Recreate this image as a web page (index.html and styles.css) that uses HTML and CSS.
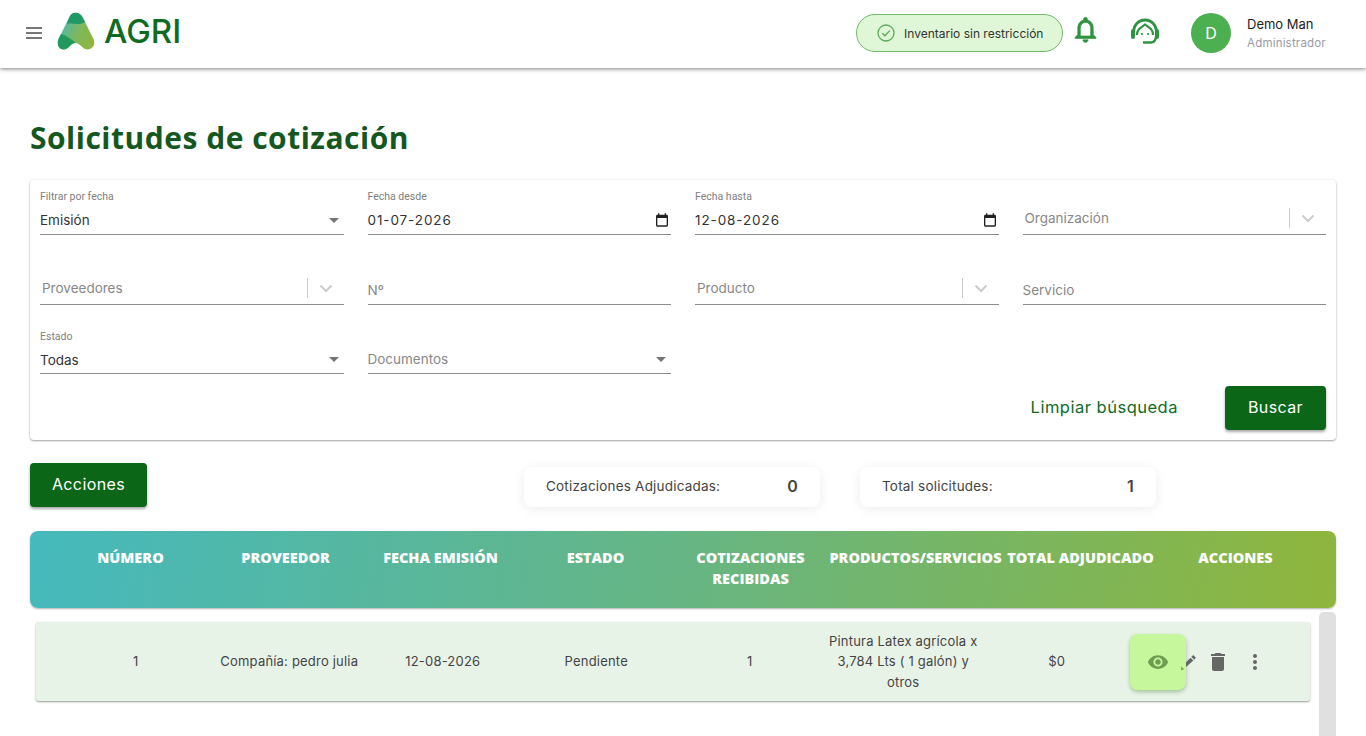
FILE: index.html
```html
<!DOCTYPE html>
<html lang="es">

<head>
    <meta charset="UTF-8">
    <meta name="viewport" content="width=device-width, initial-scale=1.0">
    <title>Solicitudes de cotización</title>
    <link rel="stylesheet" href="styles.css">
</head>

<body>
    <header class="topbar">
        <svg class="menu-icon" width="24" height="24" viewBox="0 0 24 24"><path d="M4 18h16v-2H4v2zm0-5h16v-2H4v2zm0-7v2h16V6H4z" /></svg>
        <div class="logo">
            <svg width="38" height="38" viewBox="0 0 38 38">
                <defs>
                    <linearGradient id="logoMain" x1="0" y1="0.3" x2="1" y2="0.8">
                        <stop offset="0" stop-color="#45b9bd" />
                        <stop offset="0.55" stop-color="#7fb75c" />
                        <stop offset="1" stop-color="#8fb63c" />
                    </linearGradient>
                </defs>
                <path d="M12 6C14-1 23-1 26 6L36.500 27C39 33 35 37.500 30.500 37.500C26 37.500 24 32 19 31C14 30 12 37.500 6.500 37.500C2 37.500-.5 32.500 1.500 27Z" fill="url(#logoMain)" />
                <path d="M12 6C14-1 23-1 26 6L28 10C23 14 15 10.500 9.500 12Z" fill="#1f9a66" />
                <path d="M4 22C9 23 14 27 19 31C14 30 12 37.500 6.500 37.500C2 37.500-.5 32.500 1.500 27Z" fill="#1f9a5a" />
            </svg>
            <span class="logo-text">AGRI</span>
        </div>
        <div class="topbar-right">
            <div class="chip">
                <svg width="20" height="20" viewBox="0 0 20 20" fill="none" stroke="#5aa95a" stroke-width="1.300"><circle cx="10" cy="10" r="8" /><path d="M6.300 10.200l2.600 2.600 4.900-5.200" /></svg>
                <span>Inventario sin restricción</span>
            </div>
            <svg class="bell" width="31" height="31" viewBox="0 0 24 24"><path d="M12 22c1.100 0 2-.9 2-2h-4c0 1.100.9 2 2 2zm6-6v-5c0-3.070-1.640-5.640-4.500-6.320V4c0-.83-.67-1.500-1.500-1.500s-1.500.67-1.500 1.500v.68C7.630 5.360 6 7.920 6 11v5l-2 2v1h16v-1l-2-2zm-2 1H8v-6c0-2.480 1.510-4.500 4-4.500s4 2.020 4 4.500v6z" /></svg>
            <svg class="headset" width="30" height="28" viewBox="0 0 30 28" fill="none" stroke="#2e9440" stroke-width="2.800">
                <path d="M3.500 15C3.500 7 8.500 2 15 2s11.500 5 11.500 13" />
                <path d="M7 17C7 11 10.500 10 15 6.500C19.500 10 23 11 23 17" stroke-width="2.200" />
                <path d="M3 13v6M27 13v6" stroke-width="4" stroke-linecap="round" />
                <path d="M26 19c-.5 3.500-2 5.500-5 5.500H13" stroke-width="2.400" />
                <circle cx="12" cy="16" r="1.100" fill="#2e9440" stroke="none" />
                <circle cx="18" cy="16" r="1.100" fill="#2e9440" stroke="none" />
            </svg>
            <div class="avatar">D</div>
            <div class="user">
                <div class="user-name">Demo Man</div>
                <div class="user-role">Administrador</div>
            </div>
        </div>
    </header>

    <main>
        <h1 class="page-title">Solicitudes de cotización</h1>

        <section class="filters">
            <div class="filter-grid">
                <div class="field">
                    <label class="field-label">Filtrar por fecha</label>
                    <div class="field-value">Emisión<span class="caret"></span></div>
                </div>
                <div class="field">
                    <label class="field-label">Fecha desde</label>
                    <div class="field-value date-value">01-07-2026
                        <svg class="calendar" width="16" height="16" viewBox="0 0 24 24"><path d="M19 4h-1V2h-2v2H8V2H6v2H5c-1.100 0-2 .9-2 2v14c0 1.100.9 2 2 2h14c1.100 0 2-.9 2-2V6c0-1.100-.9-2-2-2zm0 16H5V9h14v11z" /></svg>
                    </div>
                </div>
                <div class="field">
                    <label class="field-label">Fecha hasta</label>
                    <div class="field-value date-value">12-08-2026
                        <svg class="calendar" width="16" height="16" viewBox="0 0 24 24"><path d="M19 4h-1V2h-2v2H8V2H6v2H5c-1.100 0-2 .9-2 2v14c0 1.100.9 2 2 2h14c1.100 0 2-.9 2-2V6c0-1.100-.9-2-2-2zm0 16H5V9h14v11z" /></svg>
                    </div>
                </div>
                <div class="field">
                    <div class="field-value placeholder combo raised">Organización
                        <span class="combo-arrow"><svg width="20" height="20" viewBox="0 0 20 20"><path d="M4.500 7.500L10 13l5.500-5.500" fill="none" stroke="#ccc" stroke-width="2" /></svg></span>
                    </div>
                </div>
                <div class="field">
                    <div class="field-value placeholder combo raised">Proveedores
                        <span class="combo-arrow"><svg width="20" height="20" viewBox="0 0 20 20"><path d="M4.500 7.500L10 13l5.500-5.500" fill="none" stroke="#ccc" stroke-width="2" /></svg></span>
                    </div>
                </div>
                <div class="field">
                    <div class="field-value placeholder">Nº</div>
                </div>
                <div class="field">
                    <div class="field-value placeholder combo raised">Producto
                        <span class="combo-arrow"><svg width="20" height="20" viewBox="0 0 20 20"><path d="M4.500 7.500L10 13l5.500-5.500" fill="none" stroke="#ccc" stroke-width="2" /></svg></span>
                    </div>
                </div>
                <div class="field">
                    <div class="field-value placeholder">Servicio</div>
                </div>
                <div class="field">
                    <label class="field-label">Estado</label>
                    <div class="field-value">Todas<span class="caret"></span></div>
                </div>
                <div class="field">
                    <div class="field-value placeholder">Documentos<span class="caret"></span></div>
                </div>
            </div>
            <div class="filter-actions">
                <a class="link-clear">Limpiar búsqueda</a>
                <button class="btn btn-search">Buscar</button>
            </div>
        </section>

        <section class="toolbar">
            <button class="btn btn-actions">Acciones</button>
            <div class="stat stat-first"><span>Cotizaciones Adjudicadas:</span><strong>0</strong></div>
            <div class="stat"><span>Total solicitudes:</span><strong>1</strong></div>
        </section>

        <div class="table-head">
            <div>NÚMERO</div>
            <div>PROVEEDOR</div>
            <div>FECHA EMISIÓN</div>
            <div>ESTADO</div>
            <div>COTIZACIONES RECIBIDAS</div>
            <div>PRODUCTOS/SERVICIOS</div>
            <div>TOTAL ADJUDICADO</div>
            <div>ACCIONES</div>
        </div>

        <div class="table-body">
            <div class="table-list">
                <div class="table-row">
                    <div>1</div>
                    <div>Compañía: pedro julia</div>
                    <div>12-08-2026</div>
                    <div>Pendiente</div>
                    <div>1</div>
                    <div>Pintura Latex agrícola x 3,784 Lts ( 1 galón) y otros</div>
                    <div>$0</div>
                    <div class="row-actions">
                        <button class="icon-btn eye-btn">
                            <svg width="22" height="22" viewBox="0 0 24 24"><path d="M12 4.500C7 4.500 2.730 7.610 1 12c1.730 4.390 6 7.500 11 7.500s9.270-3.110 11-7.500c-1.730-4.390-6-7.500-11-7.500zM12 17c-2.760 0-5-2.240-5-5s2.240-5 5-5 5 2.240 5 5-2.240 5-5 5zm0-8c-1.660 0-3 1.340-3 3s1.340 3 3 3 3-1.340 3-3-1.340-3-3-3z" /></svg>
                        </button>
                        <svg class="pen" width="18" height="18" viewBox="0 0 24 24">
                            <path d="M8 12.250V18.750L17.810 9.940l-3.750-3.750zM20.710 7.040c.39-.39.39-1.020 0-1.410l-2.340-2.340c-.39-.39-1.020-.39-1.410 0l-1.830 1.830 3.750 3.750 1.830-1.830z" />
                            <path class="pen-tip" d="M1.500 18L5.500 21.500 1.500 23z" />
                        </svg>
                        <svg class="trash" width="24" height="24" viewBox="0 0 24 24"><path d="M6 19c0 1.100.9 2 2 2h8c1.100 0 2-.9 2-2V7H6v12zM19 4h-3.500l-1-1h-5l-1 1H5v2h14V4z" /></svg>
                        <svg class="dots" width="24" height="24" viewBox="0 0 24 24"><path d="M12 8c1.100 0 2-.9 2-2s-.9-2-2-2-2 .9-2 2 .9 2 2 2zm0 2c-1.100 0-2 .9-2 2s.9 2 2 2 2-.9 2-2-.9-2-2-2zm0 6c-1.100 0-2 .9-2 2s.9 2 2 2 2-.9 2-2-.9-2-2-2z" /></svg>
                    </div>
                </div>
            </div>
            <div class="scroll-track"></div>
        </div>
    </main>
</body>

</html>
```

FILE: styles.css
```css
html,
body {
    height: 736px;
    overflow: hidden;
}

body {
    margin: 0;
    background-color: white;
    font-family: Inter, "Liberation Sans", sans-serif;
    font-size: 13px;
    color: #444;
}

/* barra superior */
.topbar {
    box-sizing: border-box;
    height: 68px;
    display: flex;
    align-items: center;
    padding: 0 40px 2px 22px;
    background-color: white;
    box-shadow: 0 1px 4px rgba(0, 0, 0, 0.5);
}

.menu-icon {
    fill: #777;
    margin-right: 11px;
}

.logo {
    display: flex;
    align-items: center;
    gap: 9px;
    margin-bottom: 4px;
}

.logo-text {
    font-size: 33px;
    font-weight: 500;
    color: #0f6b1f;
    line-height: 1;
}

.topbar-right {
    margin-left: auto;
    display: flex;
    align-items: center;
}

.chip {
    box-sizing: border-box;
    width: 207px;
    height: 38px;
    display: flex;
    align-items: center;
    gap: 8px;
    padding-left: 19px;
    background-color: #dff7d6;
    border: 1px solid #72ba6c;
    border-radius: 19px;
    font-size: 12px;
    color: #333;
}

.bell {
    fill: #2e9440;
    stroke: #2e9440;
    stroke-width: 0.5;
    margin-left: 7px;
    margin-bottom: 7px;
}

.headset {
    margin-left: 29px;
    margin-bottom: 3px;
}

.avatar {
    width: 40px;
    height: 40px;
    margin-left: 31px;
    border-radius: 50%;
    background-color: #4caf50;
    color: white;
    font-size: 16px;
    display: flex;
    align-items: center;
    justify-content: center;
}

.user {
    margin-left: 16px;
    width: 79px;
}

.user-name {
    font-size: 13px;
    color: #222;
    margin-bottom: 4px;
}

.user-role {
    font-size: 11.500px;
    letter-spacing: 0.2px;
    color: #9b9ba6;
}

main {
    padding: 0 30px;
}

.page-title {
    margin: 52px 0 25px;
    font-family: "Open Sans", sans-serif;
    font-size: 30px;
    font-weight: 700;
    letter-spacing: 0.5px;
    line-height: 35px;
    color: #15581f;
}

/* filtros */
.filters {
    box-sizing: border-box;
    height: 260px;
    padding: 10px 10px 0;
    background-color: white;
    border-radius: 4px;
    box-shadow: 0 1px 2px rgba(0, 0, 0, 0.35), 0 0 4px rgba(0, 0, 0, 0.06);
}

.filter-grid {
    display: grid;
    grid-template-columns: repeat(4, 1fr);
    grid-template-rows: 45px 45px 44px;
    gap: 25px 24px;
}

.field {
    display: flex;
    flex-direction: column;
    justify-content: flex-end;
    border-bottom: 1px solid #8c8c8c;
}

.field-label {
    font-family: Roboto, sans-serif;
    font-size: 10.500px;
    line-height: 14px;
    color: #808080;
    margin-bottom: 2px;
}

.field-value {
    height: 28px;
    display: flex;
    align-items: center;
    justify-content: space-between;
    font-size: 13.500px;
    color: #333;
}

.date-value {
    letter-spacing: 0.9px;
}

.placeholder {
    color: #888;
}

.combo {
    padding-left: 2px;
}

.raised {
    position: relative;
    top: -2px;
}

.caret {
    width: 0;
    height: 0;
    margin-right: 5px;
    border-left: 5px solid transparent;
    border-right: 5px solid transparent;
    border-top: 5px solid #757575;
}

.calendar {
    fill: #222;
    margin-right: 1px;
}

.combo-arrow {
    height: 20px;
    width: 28px;
    display: flex;
    align-items: center;
    justify-content: flex-end;
    padding-right: 8px;
    border-left: 1px solid #ccc;
}

.filter-actions {
    margin-top: 12px;
    display: flex;
    align-items: center;
    justify-content: flex-end;
    gap: 47px;
}

.link-clear {
    font-size: 16.500px;
    letter-spacing: 0.5px;
    color: #0f6b1f;
    padding-bottom: 2px;
}

.btn {
    border: none;
    border-radius: 4px;
    background-color: #0b6618;
    color: white;
    font-family: Inter, sans-serif;
    font-size: 16px;
    letter-spacing: 0.4px;
    padding: 0 0 2px;
    box-shadow: 0 2px 3px rgba(0, 0, 0, 0.35);
}

.btn-search {
    width: 101px;
    height: 44px;
}

/* acciones y totales */
.toolbar {
    margin-top: 23px;
    height: 44px;
    display: flex;
    align-items: flex-start;
}

.btn-actions {
    width: 117px;
    height: 44px;
}

.stat {
    box-sizing: border-box;
    width: 296px;
    height: 40px;
    margin-top: 4px;
    margin-left: 40px;
    padding: 0 22px 2px;
    display: flex;
    align-items: center;
    justify-content: space-between;
    background-color: white;
    border-radius: 8px;
    box-shadow: 0 2px 12px rgba(0, 0, 0, 0.08);
    font-size: 13.500px;
    letter-spacing: 0.2px;
}

.stat-first {
    margin-left: 377px;
}

.stat strong {
    font-size: 16px;
    font-weight: 600;
}

/* tabla */
.table-head {
    box-sizing: border-box;
    height: 77px;
    margin-top: 24px;
    padding: 16px 0 0 23px;
    display: grid;
    grid-template-columns: repeat(5, 155px) 175px 155px 155px;
    align-items: start;
    background: linear-gradient(100deg, #45b9bd 0%, #66b583 50%, #8fb63c 100%);
    border-radius: 8px;
    box-shadow: 0 1px 2px rgba(0, 0, 0, 0.3);
    font-family: "Open Sans", sans-serif;
    font-size: 14.500px;
    font-weight: 800;
    line-height: 21px;
    color: white;
    text-align: center;
}

.table-body {
    display: flex;
    margin-top: 4px;
    height: 124px;
}

.table-list {
    flex: 1;
    padding: 10px 9px 0 6px;
}

.table-row {
    height: 79px;
    box-sizing: border-box;
    padding-left: 23px;
    display: grid;
    grid-template-columns: repeat(7, 153.500px) 1fr;
    align-items: center;
    background-color: #e8f3e8;
    border-radius: 3px;
    box-shadow: 0 1px 2px rgba(0, 0, 0, 0.4);
    text-align: center;
    letter-spacing: 0.2px;
    line-height: 20.500px;
}

.row-actions {
    display: flex;
    align-items: center;
    height: 100%;
}

.row-actions svg {
    fill: #666;
    flex: none;
}

.icon-btn {
    border: none;
    padding: 0;
}

.eye-btn {
    flex: none;
    width: 56px;
    height: 56px;
    margin-left: -4px;
    display: flex;
    align-items: center;
    justify-content: center;
    background-color: #c6f79c;
    border-radius: 8px;
    box-shadow: 0 2px 4px rgba(60, 120, 40, 0.4);
}

.row-actions .eye-btn svg {
    fill: #6f9c52;
}

.pen {
    margin-left: -6px;
}

.row-actions .pen-tip {
    fill: #7d9c52;
}

.trash {
    margin-left: 8px;
}

.dots {
    margin-left: 13px;
}

.scroll-track {
    width: 17px;
    background-color: #e0e0e0;
    border-radius: 5px 5px 0 0;
}
```
